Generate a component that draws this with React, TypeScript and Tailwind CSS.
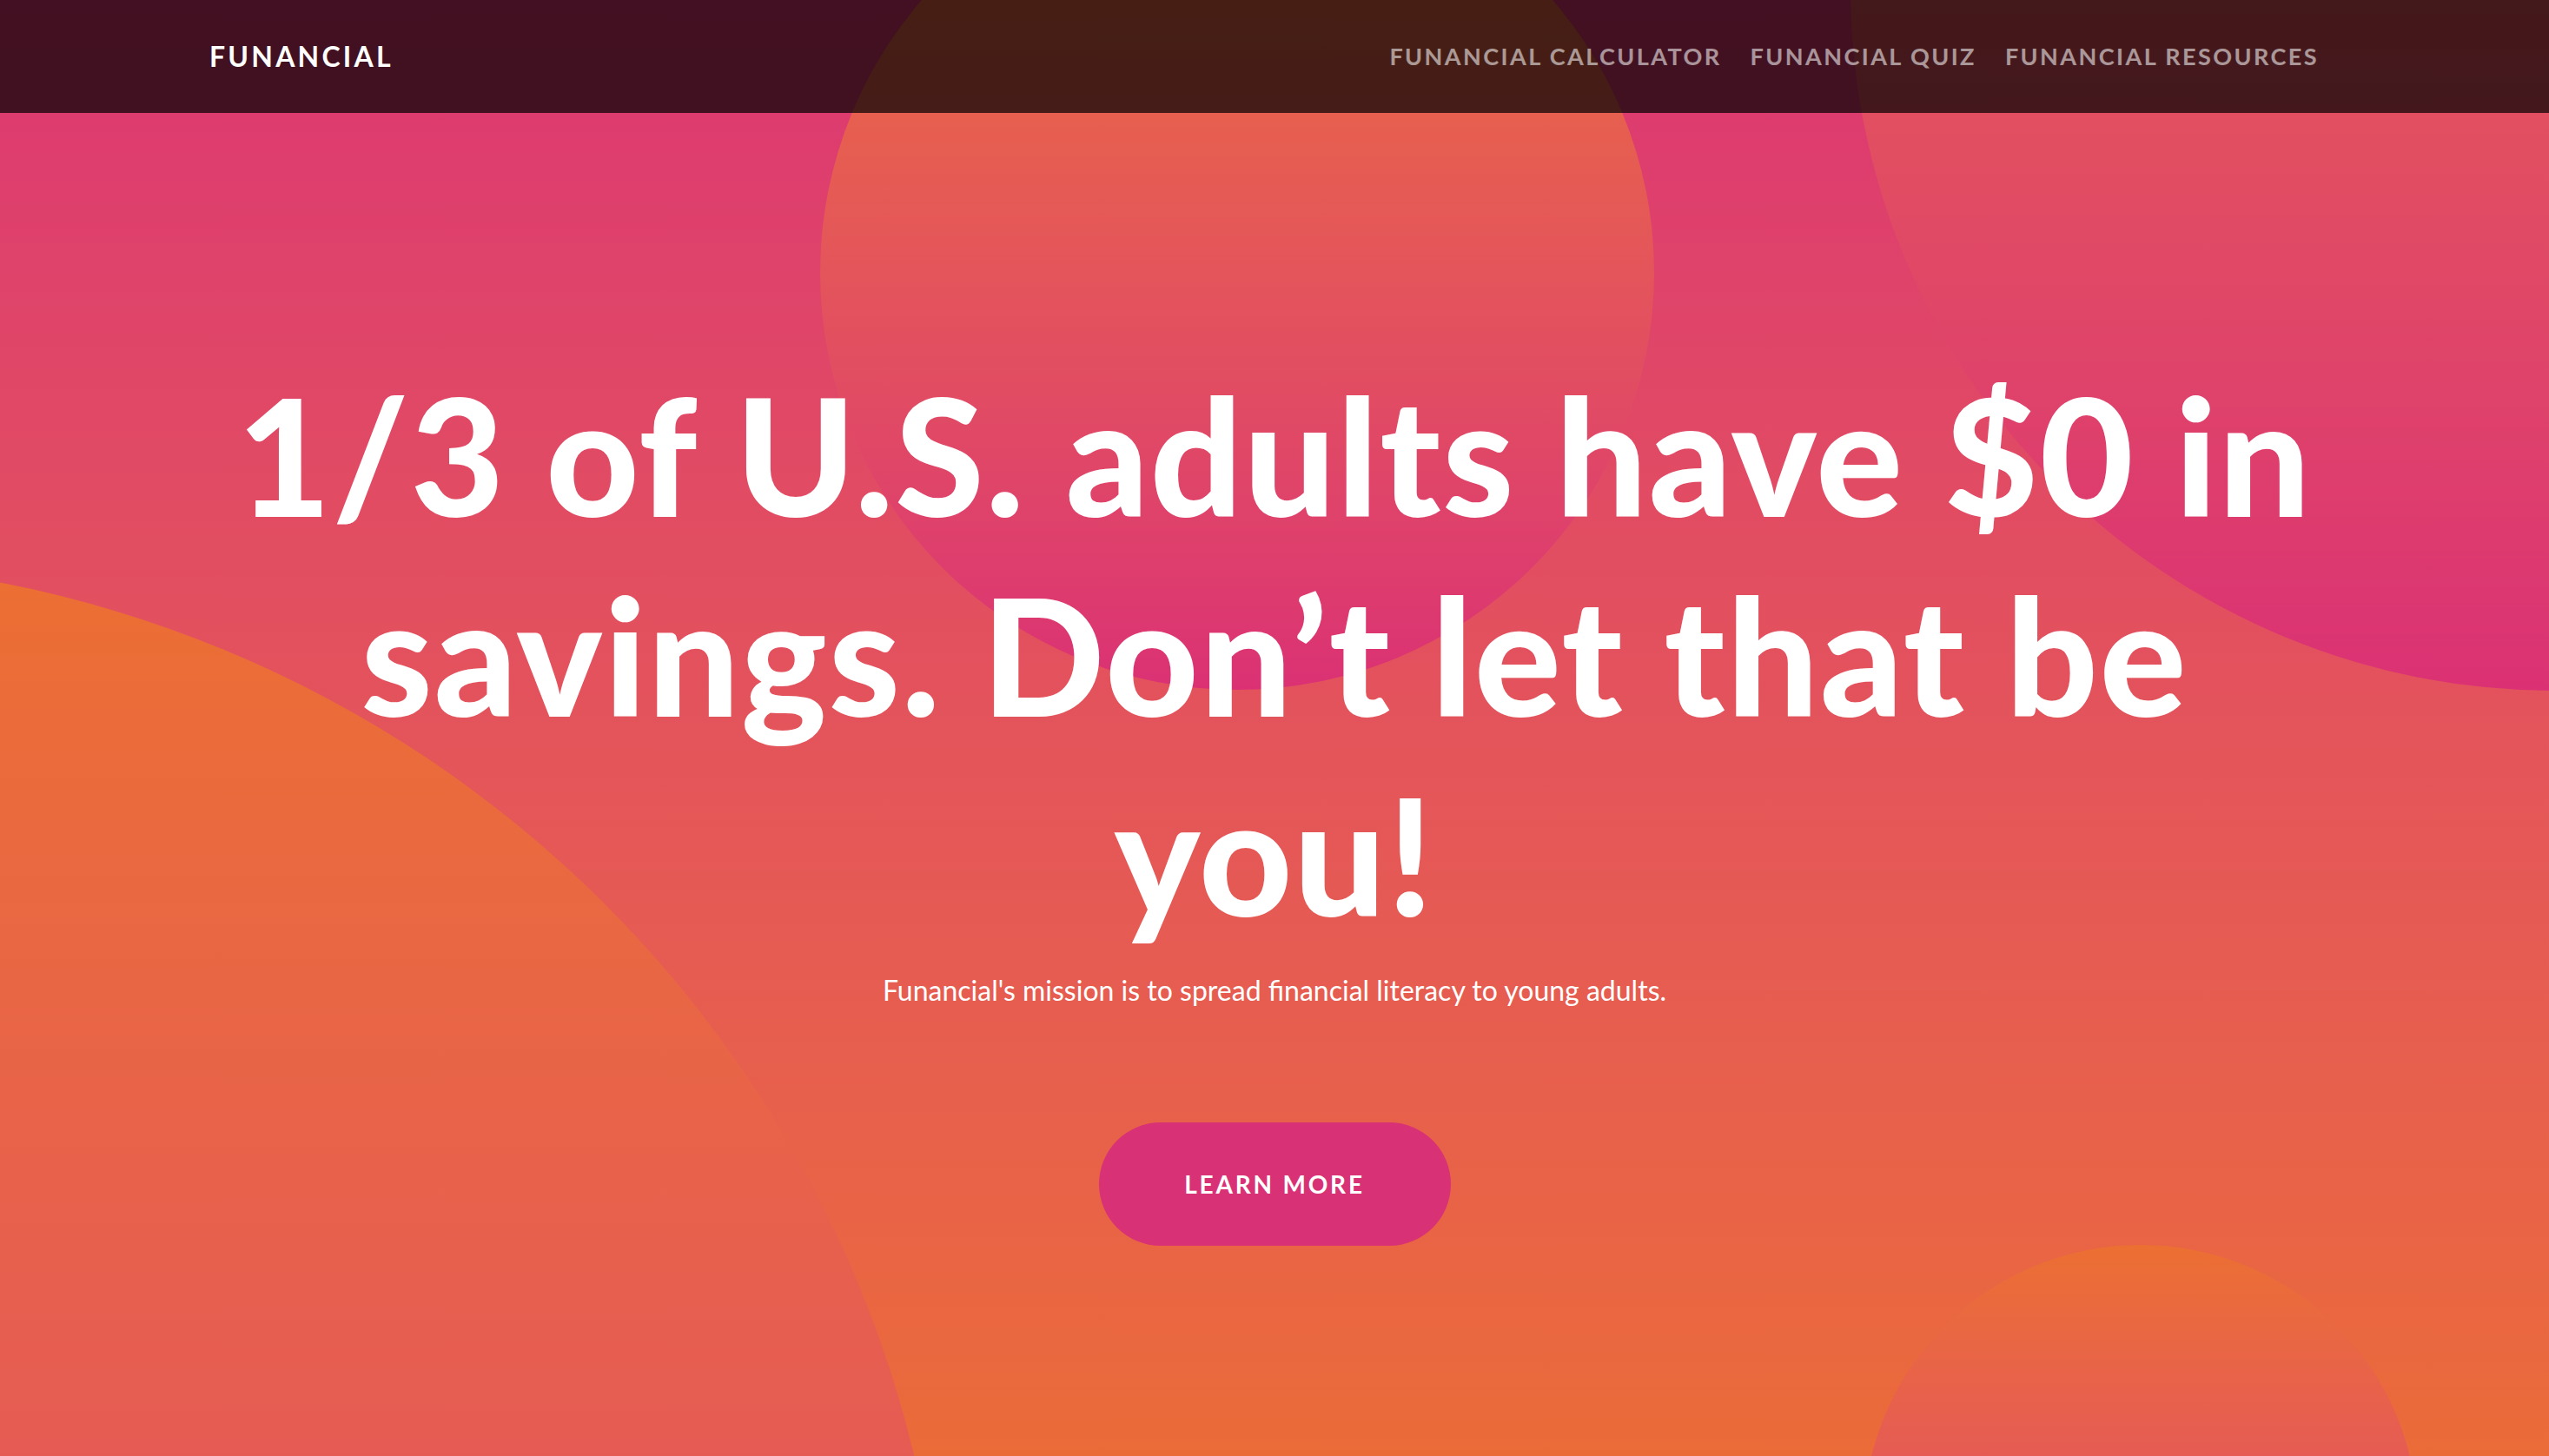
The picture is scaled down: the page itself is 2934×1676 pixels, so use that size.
import React from "react"

const navLinks = ["Funancial Calculator", "Funancial Quiz", "Funancial Resources"]

// decorative blobs behind the hero
function Blob({ className }: { className: string }) {
  return (
    <div
      aria-hidden
      className={
        "pointer-events-none absolute rounded-full bg-linear-to-b from-[#ec6f32] to-[#db3174] " + className
      }
    />
  )
}

export default function App() {
  return (
    <div className="relative h-screen w-full overflow-hidden bg-linear-to-b from-[#dc3672] to-[#eb6b38] font-['Lato','Liberation_Sans',sans-serif] text-white">
      <Blob className="left-[944px] top-[-166px] h-[960px] w-[960px]" />
      <Blob className="left-[2130px] top-[-825px] h-[1620px] w-[1620px]" />
      <Blob className="left-[-1602px] top-[646px] h-[2692px] w-[2692px]" />
      <Blob className="left-[2145px] top-[1433px] h-[638px] w-[638px]" />

      {/* Navbar */}
      <nav className="absolute inset-x-0 top-0 z-20 flex h-[130px] items-center justify-between bg-black/70 pl-[241px] pr-[265px]">
        <a href="#" className="text-[32px] font-bold uppercase tracking-[0.1em]">
          Funancial
        </a>
        <ul className="flex items-center gap-[33px]">
          {navLinks.map((link) => (
            <li key={link}>
              <a href="#" className="text-[27px] font-bold uppercase tracking-[0.09em] text-white/55 hover:text-white">
                {link}
              </a>
            </li>
          ))}
        </ul>
      </nav>

      {/* Hero */}
      <main className="relative z-10 flex h-full flex-col items-center px-[240px] pt-[408px] text-center">
        <h1 className="max-w-[2450px] text-[186px] font-black leading-[230px] tracking-[0.01em]">
          1/3 of U.S. adults have $0 in savings. Don’t let that be you!
        </h1>
        <p className="mt-[18px] text-[32px] leading-[48px]">
          Funancial's mission is to spread financial literacy to young adults.
        </p>
        <a
          href="#"
          className="mt-[128px] flex h-[142px] w-[405px] items-center justify-center rounded-full bg-[#d93176] text-[28px] font-bold uppercase tracking-[0.1em] hover:bg-[#c92a6b]"
        >
          Learn More
        </a>
      </main>
    </div>
  )
}
